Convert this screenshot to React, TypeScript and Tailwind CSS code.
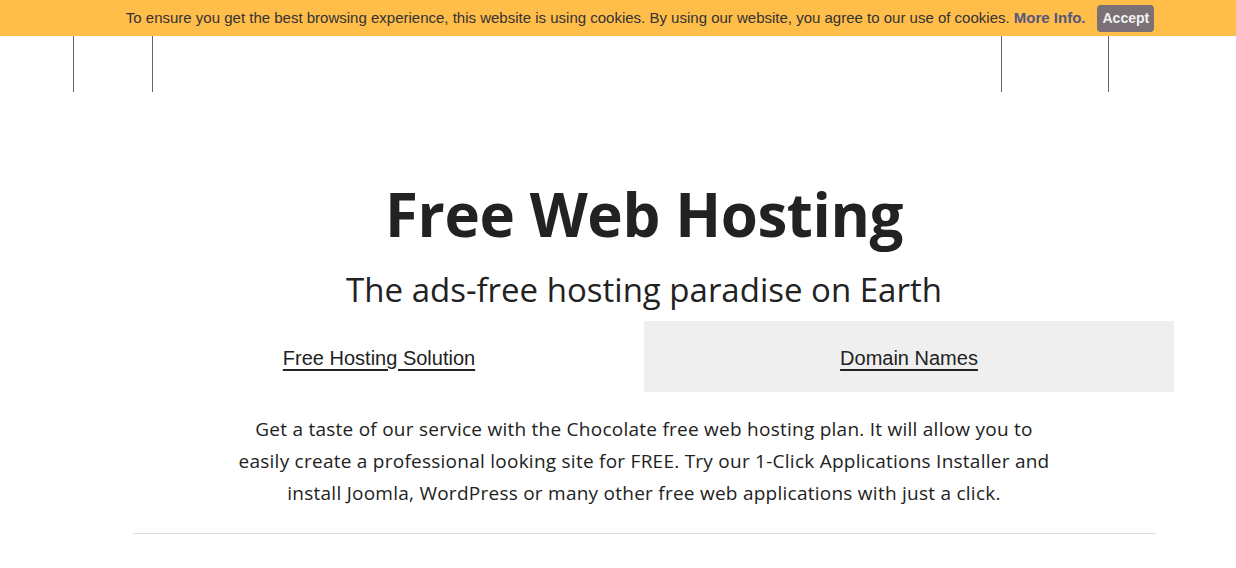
export default function App() {
  return (
    <div className="relative min-h-[568px] overflow-hidden bg-white font-['Open_Sans',sans-serif] text-[#222]">
      {/* cookie notice overlays the top of the header */}
      <div className="absolute inset-x-0 top-0 z-10 flex h-9 items-center justify-center gap-3 bg-[#ffbd49] pl-[44px] font-['Liberation_Sans',sans-serif] text-[15px] text-[#333]">
        <p>
          To ensure you get the best browsing experience, this website is using cookies. By using our website, you agree
          to our use of cookies. <a className="font-bold text-[#565680]">More Info.</a>
        </p>
        <button className="rounded-[4px] bg-[#7a7076] px-[5px] py-[3px] text-[14px] font-bold text-[#f2f2f2]">Accept</button>
      </div>

      <header className="flex h-[92px]">
        <div className="w-[73px]" />
        <div className="w-[80px] border-x border-[#666]" />
        <div className="flex-1" />
        <div className="w-[108px] border-x border-[#666]" />
        <div className="w-[127px]" />
      </header>

      <main className="ml-[114px] w-[1060px]">
        <h1 className="mt-[82px] text-center text-[60px] font-bold leading-[80px] tracking-[-0.4px]">Free Web Hosting</h1>
        <h2 className="mt-[14px] text-center text-[33px] leading-[44px]">The ads-free hosting paradise on Earth</h2>

        <nav className="mt-[9px] grid grid-cols-2 font-['Liberation_Sans',sans-serif] text-[20px]">
          <a className="flex h-[71px] items-center justify-center pt-[2px] underline underline-offset-4">Free Hosting Solution</a>
          <a className="flex h-[71px] items-center justify-center bg-[#efefef] pt-[2px] underline underline-offset-4">Domain Names</a>
        </nav>

        <p className="mx-auto mt-[21px] w-[812px] text-center text-[19px] leading-8 tracking-[0.25px]">
          Get a taste of our service with the Chocolate free web hosting plan. It will allow you to easily create a
          professional looking site for FREE. Try our 1-Click Applications Installer and install Joomla, WordPress or
          many other free web applications with just a click.
        </p>

        <hr className="mx-auto mt-6 w-[1023px] border-[#ddd]" />
      </main>
    </div>
  );
}
